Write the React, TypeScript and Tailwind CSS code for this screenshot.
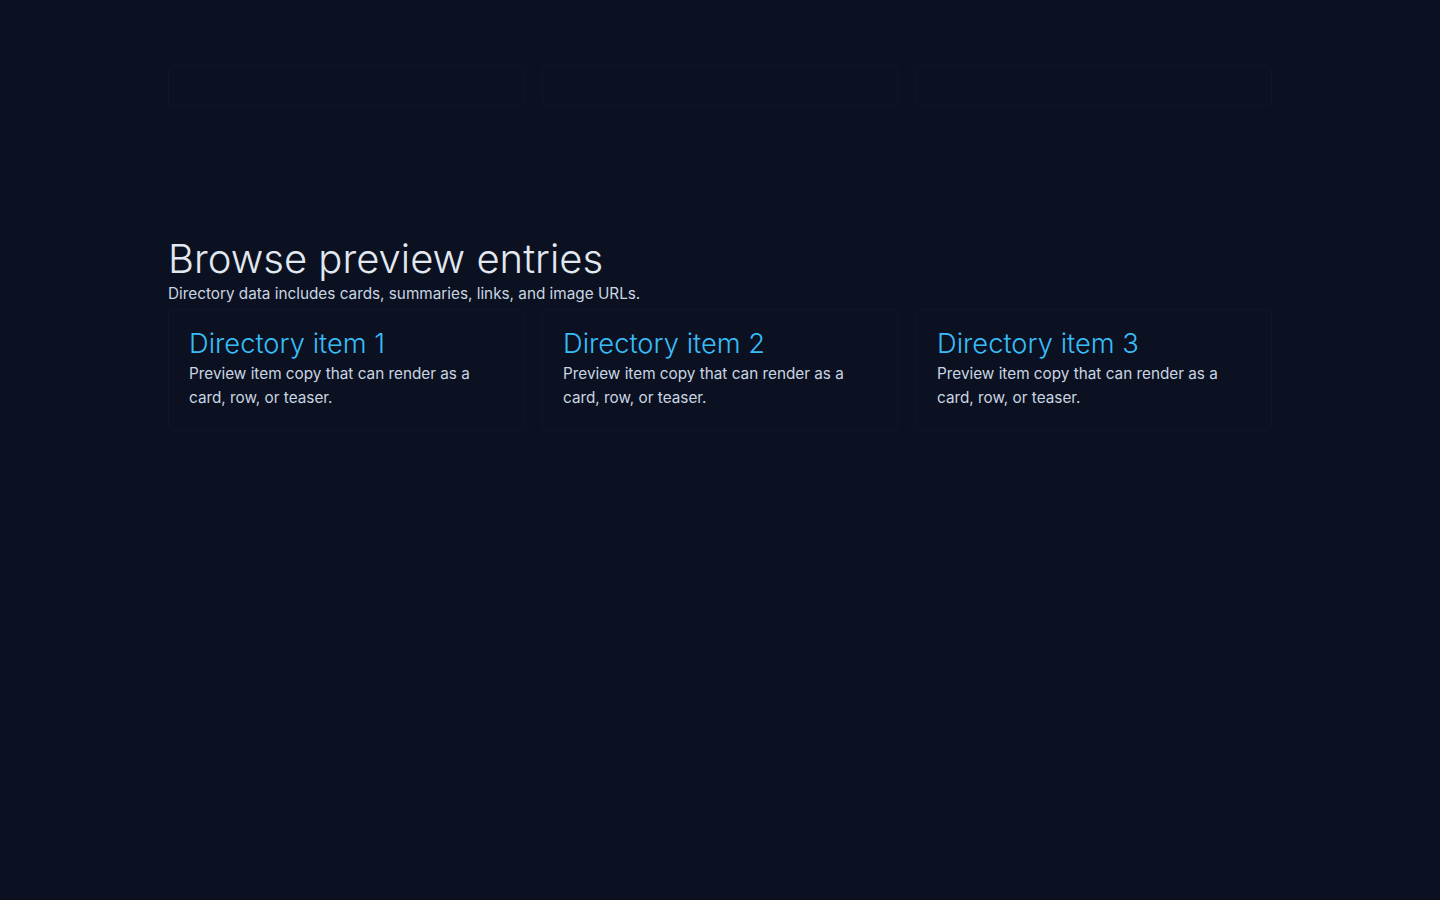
export default function App() {
  const items = [1, 2, 3];
  return (
    <div
      className="min-h-screen bg-[#0b1120] text-slate-200"
      style={{ fontFamily: "Inter, 'Noto Sans', sans-serif" }}
    >
      <div className="mx-auto w-[1104px] pt-[65px]">
        <div className="grid grid-cols-3 gap-[18px]">
          {items.map((i) => (
            <div key={i} className="h-[41px] rounded-sm border border-[#0f1727] bg-[#0b1121]" />
          ))}
        </div>
        <h1 className="mt-[130px] text-[40px] font-light leading-[46px] text-slate-200">
          Browse preview entries
        </h1>
        <p className="text-[15.3px] leading-6 text-slate-300">
          Directory data includes cards, summaries, links, and image URLs.
        </p>
        <div className="mt-[3px] grid grid-cols-3 gap-[18px]">
          {items.map((i) => (
            <div
              key={i}
              className="rounded-sm border border-[#0f1727] bg-[#0b1121] px-5 pb-5 pt-[16px]"
            >
              <h2 className="text-[27.3px] font-light leading-[36px] text-[#38bdf8]">
                Directory item {i}
              </h2>
              <p className="pr-6 text-[15.3px] leading-6 text-slate-300">
                Preview item copy that can render as a card, row, or teaser.
              </p>
            </div>
          ))}
        </div>
      </div>
    </div>
  );
}
